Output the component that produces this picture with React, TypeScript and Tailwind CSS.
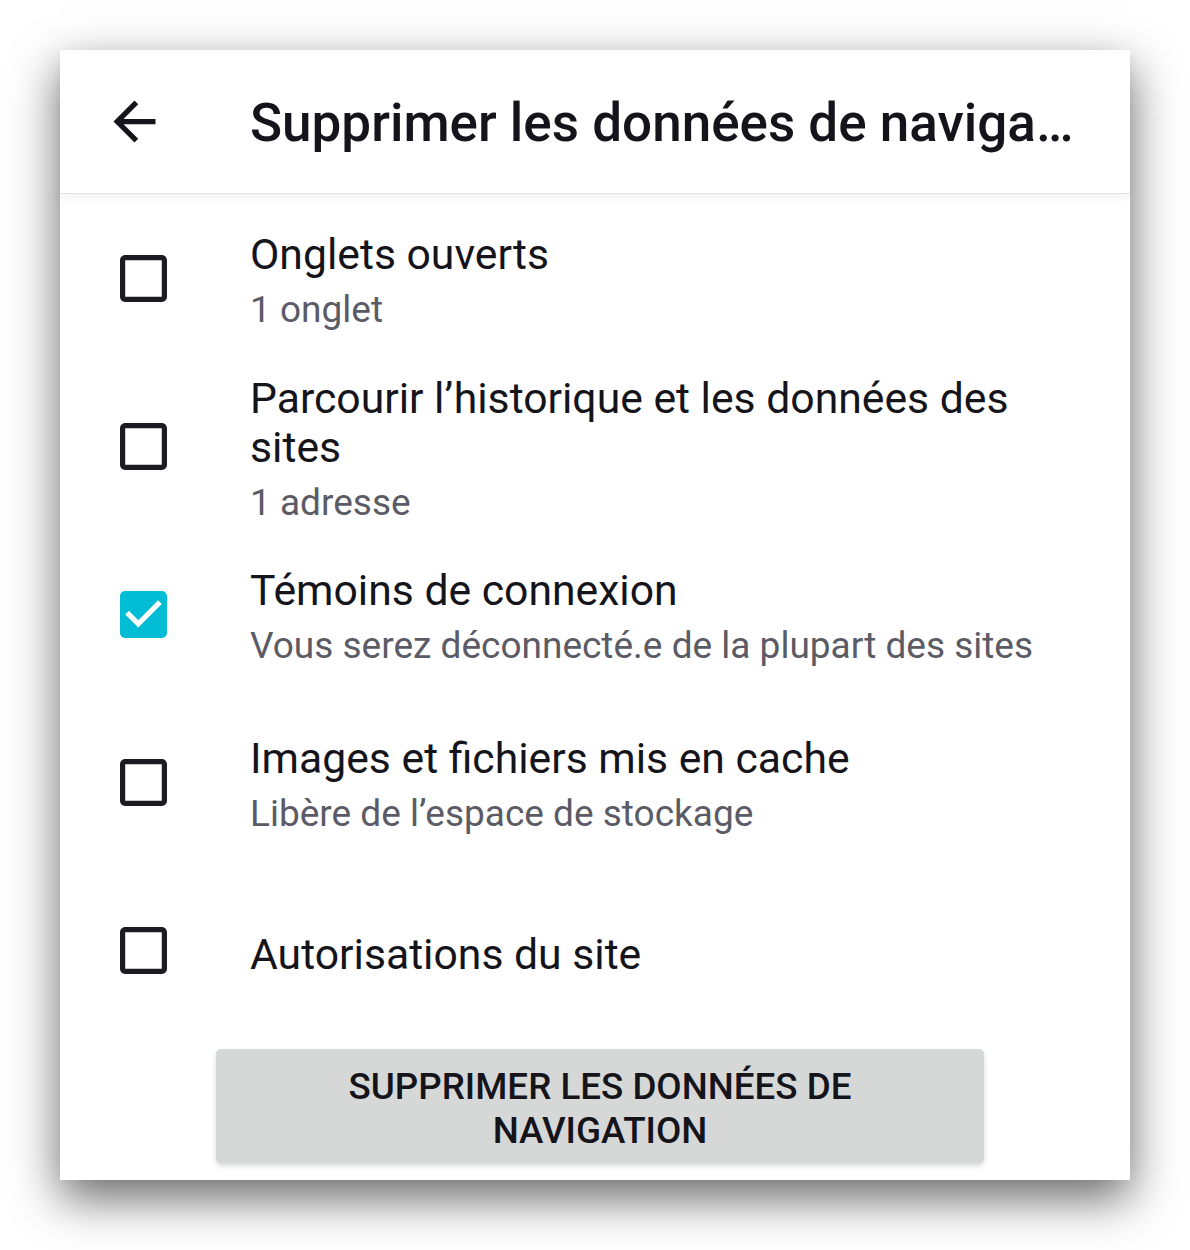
import * as React from "react";

type Item = { title: string; sub?: string; checked?: boolean };

const items: Item[] = [
  { title: "Onglets ouverts", sub: "1 onglet" },
  { title: "Parcourir l’historique et les données des sites", sub: "1 adresse" },
  { title: "Témoins de connexion", sub: "Vous serez déconnecté.e de la plupart des sites", checked: true },
  { title: "Images et fichiers mis en cache", sub: "Libère de l’espace de stockage" },
  { title: "Autorisations du site" },
];

function Checkbox({ checked }: { checked?: boolean }) {
  return (
    <svg width="47" height="47" viewBox="3 3 18 18" className="shrink-0">
      {checked ? (
        <path
          d="M19 3H5c-1.11 0-2 .9-2 2v14c0 1.1.89 2 2 2h14c1.11 0 2-.9 2-2V5c0-1.1-.89-2-2-2zm-9 14l-5-5 1.41-1.41L10 14.17l7.59-7.59L19 8l-9 9z"
          fill="#00bcd4"
        />
      ) : (
        <path
          d="M19 5v14H5V5h14m0-2H5c-1.1 0-2 .9-2 2v14c0 1.1.9 2 2 2h14c1.1 0 2-.9 2-2V5c0-1.1-.9-2-2-2z"
          fill="#1c1b22"
        />
      )}
    </svg>
  );
}

export default function App() {
  return (
    <div className="w-[1190px] h-[1250px] bg-white pt-[50px] pl-[60px] font-['Roboto',sans-serif]">
      <div className="w-[1070px] h-[1130px] bg-white shadow-[0_18px_45px_rgba(0,0,0,0.6)] flex flex-col">
        <div className="h-[144px] flex items-center border-b border-[#e3e3e3] shadow-[0_4px_8px_rgba(0,0,0,0.05)] relative">
          <div className="w-[190px] pl-[43px] flex items-center">
            <svg width="63" height="63" viewBox="0 0 24 24">
              <path d="M20 11H7.83l5.59-5.59L12 4l-8 8 8 8 1.41-1.41L7.83 13H20v-2z" fill="#15141a" />
            </svg>
          </div>
          <h1 className="flex-1 pr-[50px] text-[53px] font-medium text-[#15141a] truncate leading-[60px] pt-[2px]">
            Supprimer les données de navigation
          </h1>
        </div>
        <div className="flex flex-col">
          {items.map((it) => (
            <div key={it.title} className="h-[168px] flex items-center">
              <div className="w-[190px] pl-[60px] flex items-center">
                <Checkbox checked={it.checked} />
              </div>
              <div className="flex-1 pr-[50px] flex flex-col pt-[9px]">
                <div className="text-[42.7px] leading-[49.5px] text-[#15141a]">{it.title}</div>
                {it.sub && (
                  <div className="text-[37px] leading-[51px] mt-[4px] text-[#5b5b66]">{it.sub}</div>
                )}
              </div>
            </div>
          ))}
        </div>
        <div className="flex justify-center pl-[10px] mt-[15px]">
          <button className="w-[768px] h-[114px] bg-[#d6d8d8] rounded-[5px] shadow-[0_3px_5px_rgba(0,0,0,0.15)] text-[36.75px] leading-[44px] font-medium uppercase text-[#15141a] px-[40px] pt-[5px]">
            Supprimer les données de navigation
          </button>
        </div>
      </div>
    </div>
  );
}
